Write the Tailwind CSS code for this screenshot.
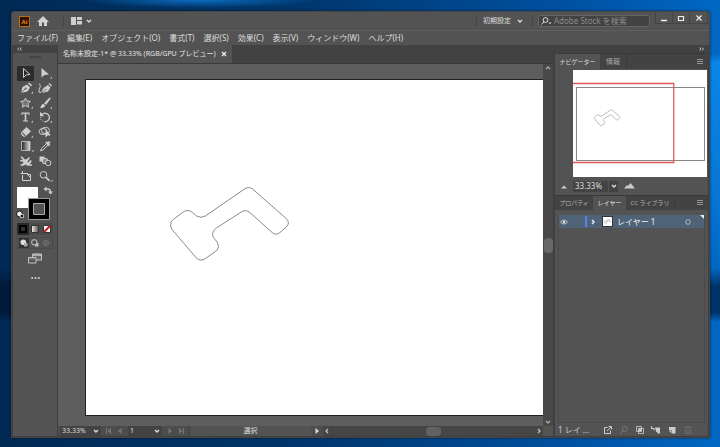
<!DOCTYPE html>
<html lang="ja">
<head>
<meta charset="utf-8">
<title>Illustrator</title>
<script src="https://cdn.jsdelivr.net/npm/@tailwindcss/browser@4"></script>
</head>
<body class="h-screen overflow-hidden bg-[#00325f] font-['Noto_Sans','Noto_Sans_CJK_JP',sans-serif] text-[8px] leading-[12px] text-[#dedede]">
<svg width="0" height="0" class="absolute" aria-hidden="true">
  <defs>
    <symbol id="down" viewBox="0 0 8 8"><path d="M2 3l2 2 2-2" fill="none" stroke="currentColor" stroke-width="1.4"/></symbol>
    <symbol id="menu" viewBox="0 0 8 8"><path d="M1 1.5h6M1 3.5h6M1 5.5h6" fill="none" stroke="currentColor" stroke-width=".8"/></symbol>
    <symbol id="shape" viewBox="0 0 480 330"><path d="M62 165Q60 156 70 148L100 126Q113 116 127 127L140 138Q152 146 166 138L282 58Q295 48 308 57L409 146Q421 158 410 170L393 185Q380 198 367 188L300 128Q287 117 274 126L199 174Q183 186 190 202L202 217Q210 231 201 241L166 266Q152 275 140 265L68 181Q62 174 62 165Z" fill="none" stroke="currentColor" vector-effect="non-scaling-stroke"/></symbol>
  </defs>
</svg>
<div class="h-full bg-[radial-gradient(ellipse_120px_8px_at_200px_0px,#0c6cc0,transparent),linear-gradient(180deg,transparent_60%,#00102a99_64%,#00102a99_70%,transparent_72%),linear-gradient(90deg,#002a54_0%,#00356a_40%,#0050a0_78%,#0068c4_100%)] pt-[11px] pb-[9px] pl-[11px]">
<div class="h-full bg-[linear-gradient(180deg,transparent_10%,#0a86e8_12%,#0878d8_40%,transparent_60%)] bg-[length:10px_100%] bg-right bg-no-repeat pr-[10px]">
<div class="flex h-full flex-col rounded-t-[3px] border border-[#464646] bg-[#535353] shadow-[0_0_3px_#0008]">

  <header class="flex h-[19px] shrink-0 items-center border-b border-[#5f5f5f] pl-[7px]">
    <svg class="size-[11px]" viewBox="0 0 11 11" role="img" aria-label="Ai"><rect x=".5" y=".5" width="10" height="10" fill="#2b1300" stroke="#b86c1c"/><text x="5.5" y="8" font-size="6" font-weight="700" text-anchor="middle" fill="#e88a1a">Ai</text></svg>
    <button aria-label="ホーム" class="ml-[7px]"><svg class="size-[12px]" viewBox="0 0 12 12"><path d="M6 1L0 7h2v4h3V7.500h2V11h3V7h2z" fill="#d2d2d2"/></svg></button>
    <span class="ml-[14px] h-[12px] w-px bg-[#474747]"></span>
    <button aria-label="ドキュメントレイアウト" class="ml-[7px] flex items-center gap-[3px]"><svg class="h-[8px] w-[11px]" viewBox="0 0 11 8"><path d="M0 0h5v8H0zM6 0h5v3H6zM6 4h5v3.500H6z" fill="#cfcfcf"/></svg><svg class="size-[8px]"><use href="#down"/></svg></button>
    <div class="flex-1"></div>
    <span class="h-[12px] w-px bg-[#474747]"></span>
    <button class="ml-[6px] flex items-center gap-[5px] text-[7px] whitespace-nowrap"><span>初期設定</span><svg class="size-[8px]"><use href="#down"/></svg></button>
    <span class="ml-[8px] h-[12px] w-px bg-[#474747]"></span>
    <label class="ml-[5px] flex h-[12px] w-[112px] items-center gap-[2px] rounded-[2px] border border-[#646464] bg-[#434343] pl-[2px]">
      <svg class="h-[8px] w-[11px] shrink-0" viewBox="0 0 11 8" fill="none" stroke="#ddd"><circle cx="4.500" cy="3" r="2.400"/><path d="M2.800 5L.5 7.500"/><path d="M7.500 5.500h3L9 7.300z" fill="#ddd" stroke="none"/></svg>
      <input aria-label="検索" class="w-full min-w-0 bg-transparent leading-[10px] outline-none placeholder:text-[#8c8c8c]" placeholder="Adobe Stock を検索">
    </label>
    <div class="ml-[5px] flex self-start divide-x divide-[#444] border border-t-0 border-[#444]">
      <button aria-label="最小化" class="grid h-[11px] w-[17px] place-items-center"><svg class="size-[8px]" viewBox="0 0 8 8"><path d="M1 6.500h6" stroke="#eee" stroke-width="1.500"/></svg></button>
      <button aria-label="最大化" class="grid h-[11px] w-[17px] place-items-center"><svg class="size-[8px]" viewBox="0 0 8 8"><path d="M1.500 2.500h5v4h-5z" fill="none" stroke="#eee" stroke-width="1.200"/></svg></button>
      <button aria-label="閉じる" class="grid h-[11px] w-[17px] place-items-center"><svg class="size-[8px]" viewBox="0 0 8 8"><path d="M1.500 1.500l5 5m0-5l-5 5" stroke="#eee" stroke-width="1.200"/></svg></button>
    </div>
    <span class="w-px"></span>
  </header>

  <nav class="flex h-[14px] shrink-0 items-center gap-[9px] pl-[5px] leading-[10px] whitespace-nowrap">
    <button>ファイル(F)</button><button>編集(E)</button><button>オブジェクト(O)</button><button>書式(T)</button><button>選択(S)</button><button>効果(C)</button><button>表示(V)</button><button>ウィンドウ(W)</button><button>ヘルプ(H)</button>
  </nav>

  <div class="flex min-h-0 flex-1 gap-px bg-[#3f3f3f] px-px pb-px">

    <aside class="flex w-[44px] shrink-0 flex-col bg-[#535353]">
      <div class="h-[8px] shrink-0 bg-[#424242] pl-[4px]"><svg class="h-[8px] w-[5px]" viewBox="0 0 5 8"><path d="M2.200 2.500L.7 4l1.500 1.500M4.700 2.500L3.200 4l1.500 1.500" stroke="#ddd" fill="none" stroke-width=".8"/></svg></div>
      <div class="mx-auto mt-[3px] mb-[8px] h-[2px] w-[12px] bg-[#444]"></div>
      <div class="mx-[4px] grid h-[117px] shrink-0 grid-cols-2 grid-rows-8 gap-x-[2px] text-[#cfcfcf]">
        <button aria-label="選択" class="grid place-items-center rounded-[1px] bg-[#2c2c2c]"><svg class="h-[12px] w-[16px]" viewBox="0 0 16 12"><path d="M5.500 1.500v9l2.600-2.600 4-.4z" fill="none" stroke="currentColor"/></svg></button>
        <button aria-label="ダイレクト選択" class="grid place-items-center"><svg class="h-[12px] w-[16px]" viewBox="0 0 16 12" fill="currentColor"><path d="M4.500 1v9.500L7.500 8l4.500-.5zM15 9.500v2H13z"/></svg></button>
        <button aria-label="ペン" class="grid place-items-center"><svg class="h-[12px] w-[16px]" viewBox="0 0 16 12" fill="currentColor"><path d="M3 11l1.500-6L9 2.500 12 5.500 9.500 9.500z"/><path d="M10 1.500l1.300-1 2.700 2.700-1 1.200zM15 9.500v2H13z"/><path d="M3 11l4-4" stroke="#535353" stroke-width=".8"/><circle cx="7.600" cy="6.400" r=".9" fill="#535353"/></svg></button>
        <button aria-label="曲線" class="grid place-items-center"><svg class="h-[12px] w-[16px]" viewBox="0 0 16 12" fill="currentColor"><path d="M5.500 11l1-5L11 3l2.500 2.500-2.500 4zM11.500 2l1-1 2.500 2.500-1 1z"/><path d="M2 2c1.500 0 1.500 2 .8 4S1 10.500 3 10.500 5 9 6 7" fill="none" stroke="currentColor"/><path d="M6 10.500L9.500 7" stroke="#535353" stroke-width=".8"/></svg></button>
        <button aria-label="スター" class="grid place-items-center"><svg class="h-[12px] w-[16px]" viewBox="0 0 16 12"><path d="M7.500 1l1.500 3 3.300.4L10 6.800l.6 3.400-3.100-1.600-3.100 1.600.6-3.400L2.700 4.400 6 4z" fill="#777" stroke="currentColor" stroke-width=".9"/><path d="M15 9.500v2H13z" fill="currentColor"/></svg></button>
        <button aria-label="ブラシ" class="grid place-items-center"><svg class="h-[12px] w-[16px]" viewBox="0 0 16 12" fill="currentColor"><path d="M13 .5c1 .5.5 1.500 0 2L9 8 7 6.200 12 1zM6.300 6.800L8.300 8.700C7 11 5 11.200 2.500 10.800 4.500 10 4 7.500 6.300 6.800zM15 9.500v2H13z"/></svg></button>
        <button aria-label="文字" class="grid place-items-center"><svg class="h-[12px] w-[16px]" viewBox="0 0 16 12" fill="currentColor"><path d="M3.500 1.500h8V4h-1V2.800H8.300v6.700H10v1H5v-1h1.700V2.800H4.500V4h-1zM15 9.500v2H13z"/></svg></button>
        <button aria-label="回転" class="grid place-items-center"><svg class="h-[12px] w-[16px]" viewBox="0 0 16 12"><path d="M5 3.500A4.300 4.300 0 1 1 8 10.800" fill="none" stroke="currentColor" stroke-width="1.300"/><path d="M8 10.800A4.500 4.500 0 0 1 3.600 6" fill="none" stroke="currentColor" stroke-dasharray="1 1"/><path d="M3 .8v4.400h4.200zM15 9.500v2H13z" fill="currentColor"/></svg></button>
        <button aria-label="消しゴム" class="grid place-items-center"><svg class="h-[12px] w-[16px]" viewBox="0 0 16 12"><path d="M8.500 1L13 5.200 7.500 10.500H5.500L3 8V6.500z" fill="currentColor"/><path d="M3.600 7L7 10.200 7.800 9.400 4.400 6.200z" fill="#535353"/><path d="M3.200 7l3.500 3.400H5.500L3 8z" fill="currentColor"/><path d="M15 9.500v2H13z" fill="currentColor"/></svg></button>
        <button aria-label="シェイプ形成" class="grid place-items-center"><svg class="h-[12px] w-[16px]" viewBox="0 0 16 12"><ellipse cx="6" cy="5.500" rx="4" ry="3" fill="none" stroke="currentColor"/><ellipse cx="8.500" cy="4.500" rx="4" ry="3.200" fill="none" stroke="currentColor"/><path d="M8.500 3.500v8L10.600 9.500l3.400-.2z" fill="currentColor"/></svg></button>
        <button aria-label="グラデーション" class="grid place-items-center"><svg class="h-[12px] w-[16px]" viewBox="0 0 16 12"><defs><linearGradient id="g"><stop stop-color="#222"/><stop offset="1" stop-color="#ddd"/></linearGradient></defs><path d="M3.500 1.500h8.500v9H3.500z" fill="url(#g)" stroke="#ccc" stroke-width=".8"/><path d="M15.500 9.500v2h-2z" fill="currentColor"/></svg></button>
        <button aria-label="スポイト" class="grid place-items-center"><svg class="h-[12px] w-[16px]" viewBox="0 0 16 12"><path d="M9 2l3.500 3.500M12.800 1.800L10.500 4" stroke="currentColor" stroke-width="2"/><path d="M9.500 3.500L4.500 8.500 3.500 10.800 6 10l5-5" fill="none" stroke="currentColor"/></svg></button>
        <button aria-label="パペットワープ" class="grid place-items-center"><svg class="h-[12px] w-[16px]" viewBox="0 0 16 12" fill="currentColor"><path d="M2.500 2l1.200-.8L7 4.500l2-.5 2-2 1 .8L10.200 5.500 9 7.500l2.500-1 .5-1.500 1.500.5-.5 2.500-2 1 3 .5v1.200H9.500L7.500 9.500 5 10.800H2.500V9.500L5 8.500 5.500 7 2 6V4.700l3 .6z"/></svg></button>
        <button aria-label="ブレンド" class="grid place-items-center"><svg class="h-[12px] w-[16px]" viewBox="0 0 16 12"><path d="M2.500 1.500h5v5h-5z" fill="currentColor"/><rect x="5.500" y="3.500" width="5" height="5" rx="1.500" fill="#888" stroke="currentColor"/><circle cx="11.200" cy="8" r="2.700" fill="#535353" stroke="currentColor"/></svg></button>
        <button aria-label="アートボード" class="grid place-items-center"><svg class="h-[12px] w-[16px]" viewBox="0 0 16 12" fill="none" stroke="currentColor"><path d="M4.500 1v2M2.500 3.500H10M4.500 5v5.500h8v-6H9.500v-1"/><path d="M9.500 4.500l3 3"/></svg></button>
        <button aria-label="ズーム" class="grid place-items-center"><svg class="h-[12px] w-[16px]" viewBox="0 0 16 12" fill="none" stroke="currentColor"><circle cx="6.500" cy="4.800" r="3.300"/><path d="M9 7.300l3.500 3.500" stroke-width="1.800"/><path d="M15.500 9.500v2H13.500z" fill="currentColor" stroke="none"/></svg></button>
      </div>
      <svg class="mx-[2px] mt-[2px] h-[36px] w-[40px] shrink-0" viewBox="0 0 40 36" role="img" aria-label="塗りと線">
        <path d="M2 2h21v21H2z" fill="#fff"/><path d="M13.500 13.500h21v21h-21z" fill="#000" stroke="#999"/><path d="M18.500 18.500h11v11h-11z" fill="#535353" stroke="#aaa"/>
        <path d="M31 4h2q2.500 0 2.500 3" fill="none" stroke="#ccc" stroke-width="1.300"/><path d="M31.500 1.500v5l-3-2.500zM33 6.500h5l-2.500 3z" fill="#ccc"/>
        <circle cx="4.500" cy="29" r="3" fill="#eee" stroke="#111"/><path d="M5.500 29.500h3v3h-3z" fill="#111" stroke="#eee" stroke-width=".7"/>
      </svg>
      <div class="mx-[4px] mt-[2px] grid shrink-0 grid-cols-3 place-items-center bg-[#4b4b4b]">
        <button aria-label="カラー" class="bg-[#292929] p-px"><svg class="size-[10px]" viewBox="0 0 10 10"><path d="M1 1h8v8H1z" fill="#000"/><path d="M3.500 3.500h3v3h-3z" fill="#333" stroke="#555" stroke-width=".5"/></svg></button>
        <button aria-label="グラデーション塗り" class="p-px"><svg class="size-[10px]" viewBox="0 0 10 10"><defs><linearGradient id="h"><stop stop-color="#f4f4f4"/><stop offset="1" stop-color="#5c514c"/></linearGradient></defs><path d="M1.500 1.500h7v7h-7z" fill="url(#h)" stroke="#333"/></svg></button>
        <button aria-label="なし" class="p-px"><svg class="size-[10px]" viewBox="0 0 10 10"><path d="M1.500 1.500h7v7h-7z" fill="#fff" stroke="#333"/><path d="M2 8l6-6" stroke="#d0141c" stroke-width="2"/></svg></button>
      </div>
      <div class="mx-[4px] mt-[2px] grid shrink-0 grid-cols-3 place-items-center border border-[#4a4a4a]">
        <button aria-label="標準描画" class="bg-[#333]"><svg class="size-[10px]" viewBox="0 0 10 10"><circle cx="4.300" cy="4.300" r="2.800" fill="#ddd"/><path d="M5 5h3.500v3.500H5z" fill="#aaa"/></svg></button>
        <button aria-label="背面描画"><svg class="size-[10px]" viewBox="0 0 10 10"><path d="M5 5h3.500v3.500H5z" fill="#bbb"/><circle cx="4.300" cy="4.300" r="2.700" fill="#535353" stroke="#ccc"/></svg></button>
        <button aria-label="内側描画"><svg class="size-[10px]" viewBox="0 0 10 10"><circle cx="5" cy="5" r="2.500" fill="#5e5e5e" stroke="#737373"/></svg></button>
      </div>
      <button aria-label="スクリーンモード" class="mx-auto mt-[4px]"><svg class="h-[11px] w-[14px]" viewBox="0 0 14 11" stroke="#c4c4c4"><path d="M4.500 1h9v6h-9z" fill="#666"/><path d="M4.500 2h9" stroke-width="1.500"/><path d="M.5 4.500H8v5.500H.5z" fill="#535353"/><path d="M1 6h6.500" stroke-width=".5"/></svg></button>
      <button aria-label="ツールバーを編集" class="mx-auto mt-[12px]"><svg class="h-[4px] w-[9px]" viewBox="0 0 9 4" fill="#ccc"><circle cx="1.200" cy="2" r="1.100"/><circle cx="4.500" cy="2" r="1.100"/><circle cx="7.800" cy="2" r="1.100"/></svg></button>
    </aside>

    <main class="flex min-w-0 flex-1 flex-col bg-[#5e5e5e]">
      <div class="flex h-[19px] shrink-0 border-b border-[#3a3a3a] bg-[#424242]">
        <div class="flex items-center gap-[5px] bg-[#535353] px-[5px] whitespace-nowrap text-[7px] text-[#e4e4e4]"><span>名称未設定-1* @ 33.33% (RGB/GPU プレビュー)</span><button aria-label="タブを閉じる"><svg class="size-[6px]" viewBox="0 0 6 6"><path d="M1 1l4 4m0-4L1 5" stroke="#eee" stroke-width="1.300"/></svg></button></div>
      </div>
      <div class="flex min-h-0 flex-1">
        <div class="min-w-0 flex-1 overflow-hidden pt-[15px] pb-[10px] pl-[27px]">
          <div class="h-full border-t border-b border-l border-[#222] bg-white">
            <svg class="mt-[90px] ml-[64px] h-[110px] w-[160px] text-[#8a8a8a]" role="img" aria-label="パス"><use href="#shape"/></svg>
          </div>
        </div>
        <div class="flex w-[10px] shrink-0 flex-col items-center justify-between bg-[#484848] text-[#aaa]">
          <button aria-label="上へ"><svg class="size-[8px] rotate-180"><use href="#down"/></svg></button>
          <div class="h-[15px] w-[9px] rounded-[4px] bg-[#686868]"></div>
          <button aria-label="下へ"><svg class="size-[8px]"><use href="#down"/></svg></button>
        </div>
      </div>
      <div class="flex h-[10px] shrink-0 items-center bg-[#4d4d4d] text-[7px] leading-[10px]">
        <label class="ml-[2px] flex h-full w-[41px] items-center justify-between bg-[#434343] pl-[2px]"><input aria-label="ズーム倍率" value="33.33%" class="w-[29px] min-w-0 bg-transparent outline-none"><svg class="mr-px size-[8px] shrink-0"><use href="#down"/></svg></label>
        <div class="flex w-[27px] items-center justify-center gap-[5px] text-[#777]"><button aria-label="最初"><svg class="size-[6px]" viewBox="0 0 6 6" fill="currentColor"><path d="M0 0h1v6H0zM5 0v6L1.500 3z"/></svg></button><button aria-label="前"><svg class="size-[6px]" viewBox="0 0 6 6" fill="currentColor"><path d="M4.500 0v6L1 3z"/></svg></button></div>
        <label class="flex h-full w-[34px] items-center justify-between bg-[#434343] pl-[2px]"><input aria-label="アートボード番号" value="1" class="w-[20px] min-w-0 bg-transparent outline-none"><svg class="mr-px size-[8px] shrink-0"><use href="#down"/></svg></label>
        <div class="flex w-[27px] items-center justify-center gap-[5px] text-[#777]"><button aria-label="次"><svg class="size-[6px]" viewBox="0 0 6 6" fill="currentColor"><path d="M1.500 0v6L5 3z"/></svg></button><button aria-label="最後"><svg class="size-[6px]" viewBox="0 0 6 6" fill="currentColor"><path d="M5 0h1v6H5zM1 0v6l3.500-3z"/></svg></button></div>
        <div class="h-full w-[122px] border-l border-[#404040] bg-[#535353] text-center">選択</div>
        <button aria-label="ステータス表示" class="grid h-full w-[12px] place-items-center"><svg class="size-[6px]" viewBox="0 0 6 6" fill="#ddd"><path d="M1.500 0v6L5 3z"/></svg></button>
        <div class="flex h-full flex-1 items-center justify-between bg-[#464646] text-[#bbb]">
          <button aria-label="左へ"><svg class="size-[8px] rotate-90"><use href="#down"/></svg></button>
          <div class="h-[9px] w-[15px] rounded-[4px] bg-[#626262]"></div>
          <button aria-label="右へ"><svg class="size-[8px] -rotate-90"><use href="#down"/></svg></button>
        </div>
        <span class="h-full w-[10px] bg-[#535353]"></span>
      </div>
    </main>

    <aside class="ml-px flex w-[153px] shrink-0 flex-col bg-[#535353]">
      <div class="flex h-[8px] shrink-0 justify-end bg-[#424242] pr-[4px]"><svg class="h-[8px] w-[5px]" viewBox="0 0 5 8"><path d="M.5 2.500L2 4 .5 5.500M3 2.500L4.500 4 3 5.500" stroke="#ddd" fill="none" stroke-width=".8"/></svg></div>
      <div class="flex h-[16px] shrink-0 items-stretch border-t border-[#393939] bg-[#434343] pr-[4px] text-[7px]">
        <button class="w-[45px] bg-[#535353] text-[6px]">ナビゲーター</button>
        <button class="w-[27px] border-r border-[#3a3a3a] text-[#aaa]">情報</button>
        <button aria-label="ナビゲーターメニュー" class="ml-auto"><svg class="size-[8px] text-[#aaa]"><use href="#menu"/></svg></button>
      </div>
      <div class="mt-px mr-px ml-[18px] h-[107px] shrink-0">
        <svg class="h-full w-full bg-white" viewBox="0 0 135 107" preserveAspectRatio="none" role="img" aria-label="ナビゲーター表示">
          <rect x="3.500" y="17.500" width="129" height="73" fill="none" stroke="#888"/>
          <path d="M0 13.500h101.500v79H0" fill="none" stroke="#dc5a5a" stroke-width="1.300"/>
          <svg x="17" y="36" width="35" height="24" class="text-[#bbb]" viewBox="0 0 480 330"><use href="#shape"/></svg>
        </svg>
      </div>
      <div class="flex h-[18px] shrink-0 items-center pl-[5px]">
        <button aria-label="縮小"><svg class="h-[5px] w-[8px]" viewBox="0 0 8 5"><path d="M1 4.500L4 1.500l3 3z" fill="#ccc"/></svg></button>
        <label class="ml-[5px] flex h-[11px] items-center bg-[#434343] pl-[2px]"><input aria-label="表示倍率" value="33.33%" class="w-[33px] min-w-0 bg-transparent leading-[10px] outline-none"><span class="grid h-full w-[10px] place-items-center border-l border-[#555]"><svg class="size-[8px]"><use href="#down"/></svg></span></label>
        <button aria-label="拡大" class="ml-[6px]"><svg class="h-[6px] w-[11px]" viewBox="0 0 11 6"><path d="M0 5.500L3 2l1 1L6.500 0 11 5.500z" fill="#ccc"/></svg></button>
      </div>
      <div class="flex h-[15px] shrink-0 items-stretch border-t border-[#393939] bg-[#434343] pr-[4px] text-[6px] text-[#b4b4b4]">
        <button class="w-[38px]">プロパティ</button>
        <button class="w-[33px] bg-[#535353] text-[#eee]">レイヤー</button>
        <button class="w-[49px] border-r border-[#3a3a3a]">CC ライブラリ</button>
        <button aria-label="レイヤーメニュー" class="ml-auto"><svg class="size-[8px] text-[#aaa]"><use href="#menu"/></svg></button>
      </div>
      <div class="mx-[3px] mt-[5px] min-h-0 flex-1 border border-t-0 border-[#494949]">
        <div class="flex h-[13px] items-center bg-[#4e6377] text-[#f0f0f0]">
          <button aria-label="表示切替" class="ml-px flex w-[25px]"><svg class="h-[6px] w-[8px]" viewBox="0 0 9 6"><path d="M.5 3Q4.500-1.500 8.500 3 4.500 7.500.5 3z" fill="none" stroke="#ddd" stroke-width=".9"/><circle cx="4.500" cy="3" r="1.400" fill="#ddd"/></svg></button>
          <span class="h-[11px] w-[2px] bg-[#5b81ea]"></span>
          <button aria-label="展開" class="ml-[2px]"><svg class="size-[8px] -rotate-90"><use href="#down"/></svg></button>
          <svg class="ml-[5px] size-[11px] border border-[#333] bg-white text-[#bbb]" viewBox="0 0 480 330"><use href="#shape"/></svg>
          <span class="ml-[4px]">レイヤー 1</span>
          <button aria-label="ターゲット" class="mr-[9px] ml-auto"><svg class="size-[6px]" viewBox="0 0 6 6"><circle cx="3" cy="3" r="2.300" fill="none" stroke="#ccc" stroke-width=".8"/></svg></button>
          <svg class="size-[4px] self-start" viewBox="0 0 4 4"><path d="M0 0h4v4z" fill="#eee"/></svg>
        </div>
      </div>
      <div class="flex h-[13px] shrink-0 items-center pr-[15px] pl-[3px] text-[#ccc]">
        <span class="mr-auto">1 レイ ...</span>
        <div class="flex gap-[6px]">
          <button aria-label="書き出し"><svg class="size-[10px]" viewBox="0 0 10 10" fill="none" stroke="currentColor"><path d="M4.500 2.500h-3v6h6v-3M4 6l4-4M5.500 1.500h3v3"/></svg></button>
          <button aria-label="検索" class="text-[#777]"><svg class="size-[10px]" viewBox="0 0 10 10" fill="none" stroke="currentColor"><circle cx="5.800" cy="4" r="2.500"/><path d="M4 6L1.500 8.500"/></svg></button>
          <button aria-label="マスク"><svg class="size-[10px]" viewBox="0 0 10 10" stroke="currentColor"><path d="M1.500 1.500h5v5h-5zM3.500 3.500h5v5h-5z" fill="none" stroke-width=".8"/><path d="M4 4h2v2H4z" fill="currentColor"/></svg></button>
          <button aria-label="新規サブレイヤー"><svg class="size-[10px]" viewBox="0 0 10 10" fill="currentColor"><path d="M4 2.500h5v6H7.300L5 6.500zM0 1h1v2h2.500v2.500L1.500 4H0z"/></svg></button>
          <button aria-label="新規レイヤー"><svg class="size-[10px]" viewBox="0 0 10 10" fill="currentColor"><path d="M2 2h6.500v6.500H5V5.500H2z"/><path d="M2 6h2.500v2.500z"/></svg></button>
          <button aria-label="削除" class="text-[#6c6c6c]"><svg class="size-[10px]" viewBox="0 0 10 10" fill="none" stroke="currentColor"><path d="M1.500 2.500h7M4 1.500h2M2.500 3v5.500h5V3M5 4v3.500"/></svg></button>
        </div>
      </div>
    </aside>
  </div>
</div>
</div>
</div>
</body>
</html>
